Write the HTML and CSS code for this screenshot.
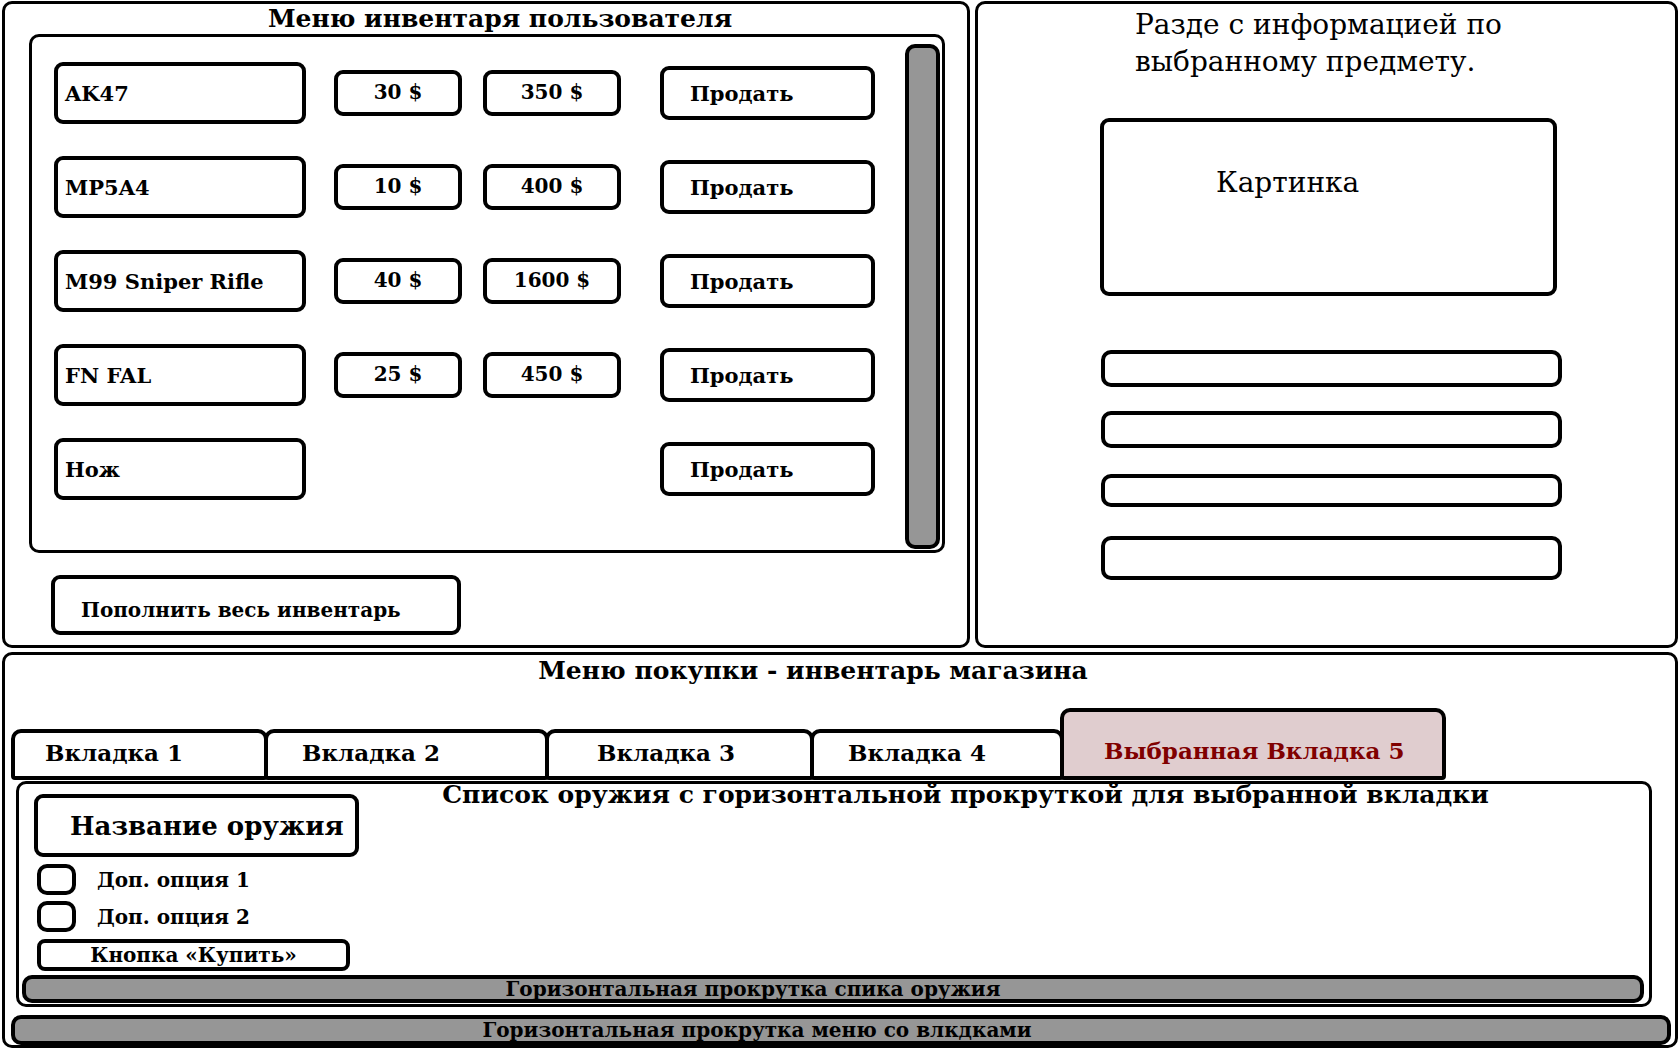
FILE: index.html
```html
<!DOCTYPE html>
<html lang="ru">
<head>
    <meta charset="utf-8">
    <title>Магазин оружия - макет</title>
    <link rel="stylesheet" href="styles.css">
</head>
<body>
<div class="page">
    <div class="top">
        <section class="panel inventory">
            <h2 class="title">Меню инвентаря пользователя</h2>
            <div class="inv-box">
                <div class="inv-list">
                    <div class="inv-row">
                        <div class="box name">AK47</div>
                        <div class="box price">30 $</div>
                        <div class="box price price2">350 $</div>
                        <div class="box sell">Продать</div>
                    </div>
                    <div class="inv-row">
                        <div class="box name">MP5A4</div>
                        <div class="box price">10 $</div>
                        <div class="box price price2">400 $</div>
                        <div class="box sell">Продать</div>
                    </div>
                    <div class="inv-row">
                        <div class="box name">M99 Sniper Rifle</div>
                        <div class="box price">40 $</div>
                        <div class="box price price2">1600 $</div>
                        <div class="box sell">Продать</div>
                    </div>
                    <div class="inv-row">
                        <div class="box name">FN FAL</div>
                        <div class="box price">25 $</div>
                        <div class="box price price2">450 $</div>
                        <div class="box sell">Продать</div>
                    </div>
                    <div class="inv-row">
                        <div class="box name">Нож</div>
                        <div class="box sell">Продать</div>
                    </div>
                </div>
                <div class="vscroll"></div>
            </div>
            <div class="box refill">Пополнить весь инвентарь</div>
        </section>

        <section class="panel info">
            <h2 class="info-title">Разде с информацией по<br>выбранному предмету.</h2>
            <div class="box picture">Картинка</div>
            <div class="box field field-first"></div>
            <div class="box field"></div>
            <div class="box field field-thin"></div>
            <div class="box field field-tall"></div>
        </section>
    </div>

    <section class="panel shop">
        <h2 class="title shop-title">Меню покупки - инвентарь магазина</h2>
        <div class="tabs">
            <div class="tab">Вкладка 1</div>
            <div class="tab">Вкладка 2</div>
            <div class="tab">Вкладка 3</div>
            <div class="tab">Вкладка 4</div>
            <div class="tab active">Выбранная Вкладка 5</div>
        </div>
        <div class="shop-box">
            <div class="shop-main">
                <div class="card">
                    <div class="box weapon-name">Название оружия</div>
                    <div class="option"><span class="check"></span>Доп. опция 1</div>
                    <div class="option"><span class="check"></span>Доп. опция 2</div>
                    <div class="box buy">Кнопка «Купить»</div>
                </div>
                <h3 class="title list-title">Список оружия с горизонтальной прокруткой для выбранной вкладки</h3>
            </div>
            <div class="hscroll inner-scroll">Горизонтальная прокрутка спика оружия</div>
        </div>
        <div class="hscroll outer-scroll">Горизонтальная прокрутка меню со влкдками</div>
    </section>
</div>
</body>
</html>
```

FILE: styles.css
```css
* {
    box-sizing: border-box;
}

body {
    margin: 0;
    background: #fff;
    color: #000;
    font-family: "DejaVu Serif", "Liberation Serif", serif;
}

.page {
    width: 1680px;
    height: 1050px;
    padding: 1px 2px 2px;
    display: flex;
    flex-direction: column;
    gap: 4px;
}

.top {
    display: flex;
    gap: 5px;
    height: 647px;
}

.panel {
    border: 3px solid #000;
    border-radius: 10px;
    background: #fff;
}

.title {
    margin: 0;
    font-size: 25px;
    font-weight: bold;
    line-height: 30px;
    text-align: center;
}

.box {
    border: 4px solid #000;
    border-radius: 9px;
    background: #fff;
    font-weight: bold;
    display: flex;
    align-items: center;
    line-height: 1;
}

/* inventory */

.inventory {
    width: 968px;
    display: flex;
    flex-direction: column;
}

.inventory .title {
    height: 30px;
    padding-left: 28px;
}

.inv-box {
    margin: 0 22px 0 24px;
    height: 519px;
    border: 3px solid #000;
    border-radius: 10px;
    display: flex;
    padding-right: 2px;
}

.inv-list {
    flex: 1;
    padding: 20px 0 0 22px;
    display: flex;
    flex-direction: column;
    gap: 22px;
}

.inv-row {
    display: grid;
    grid-template-columns: 280px 149px 177px 215px;
    align-items: center;
    height: 72px;
}

.name {
    width: 252px;
    height: 62px;
    padding-left: 7px;
    font-size: 21px;
}

.price {
    width: 128px;
    height: 46px;
    justify-content: center;
    font-size: 20px;
    padding-bottom: 3px;
}

.price2 {
    width: 138px;
}

.sell {
    grid-column: 4;
    width: 215px;
    height: 54px;
    padding-left: 26px;
    font-size: 21px;
}

.vscroll {
    width: 35px;
    margin: 7px 0 1px;
    border: 4px solid #000;
    border-radius: 10px;
    background: #969696;
}

.refill {
    width: 410px;
    height: 60px;
    margin: 22px 0 0 46px;
    padding: 10px 0 0 26px;
    font-size: 20px;
}

/* item info */

.info {
    width: 703px;
    padding-top: 2px;
    display: flex;
    flex-direction: column;
    align-items: flex-start;
}

.info-title {
    margin: 0 0 0 157px;
    font-size: 28px;
    font-weight: normal;
    line-height: 37px;
}

.picture {
    width: 457px;
    height: 178px;
    margin: 38px 0 0 122px;
    padding: 47px 0 0 112px;
    align-items: flex-start;
    font-size: 28px;
    font-weight: normal;
}

.field {
    width: 461px;
    height: 37px;
    margin: 24px 0 0 123px;
    border-radius: 10px;
}

.field-first {
    margin-top: 54px;
}

.field-thin {
    height: 33px;
    margin-top: 26px;
}

.field-tall {
    height: 44px;
    margin-top: 29px;
}

/* shop */

.shop {
    height: 396px;
    display: flex;
    flex-direction: column;
}

.shop-title {
    line-height: 32px;
    padding-right: 54px;
}

.tabs {
    display: flex;
    align-items: flex-end;
    height: 72px;
    margin: 21px 0 0 6px;
}

.tab {
    height: 51px;
    border: 4px solid #000;
    border-radius: 10px 10px 4px 4px;
    background: #fff;
    padding: 0 0 4px 34px;
    font-size: 23px;
    font-weight: bold;
    display: flex;
    align-items: center;
}

.tab + .tab {
    margin-left: -4px;
}

.tab:nth-child(1) { width: 257px; padding-left: 30px; }
.tab:nth-child(2) { width: 285px; }
.tab:nth-child(3) { width: 269px; padding-left: 48px; }
.tab:nth-child(4) { width: 254px; }
.tab:nth-child(5) { width: 386px; padding-left: 40px; }

.tab.active {
    height: 72px;
    background: #e0cdcf;
    color: #800000;
    align-items: flex-end;
    padding-bottom: 12px;
}

.shop-box {
    width: 1636px;
    height: 226px;
    margin: 1px 0 0 11px;
    border: 3px solid #000;
    border-radius: 10px;
    display: flex;
    flex-direction: column;
    padding: 0 5px 0 3px;
}

.shop-main {
    flex: 1;
    display: flex;
}

.card {
    margin: 10px 0 0 12px;
    display: flex;
    flex-direction: column;
}

.weapon-name {
    width: 325px;
    height: 63px;
    padding-left: 32px;
    font-size: 26px;
}

.option {
    display: flex;
    align-items: center;
    gap: 21px;
    margin: 7px 0 0 3px;
    font-size: 20px;
    font-weight: bold;
}

.option + .option {
    margin-top: 6px;
}

.check {
    width: 39px;
    height: 31px;
    border: 4px solid #000;
    border-radius: 10px;
}

.buy {
    width: 313px;
    height: 32px;
    margin: 7px 0 0 3px;
    justify-content: center;
    font-size: 20px;
    border-radius: 8px;
}

.list-title {
    flex: 1;
    margin-top: -4px;
    padding-right: 72px;
}

.hscroll {
    height: 30px;
    border: 4px solid #000;
    border-radius: 10px;
    background: #969696;
    text-align: center;
    font-size: 20px;
    font-weight: bold;
    line-height: 22px;
    padding-right: 160px;
}

.inner-scroll {
    height: 28px;
    line-height: 20px;
    margin-bottom: 1px;
}

.outer-scroll {
    width: 1660px;
    margin: 8px 0 0 6px;
    padding-right: 168px;
}
```
